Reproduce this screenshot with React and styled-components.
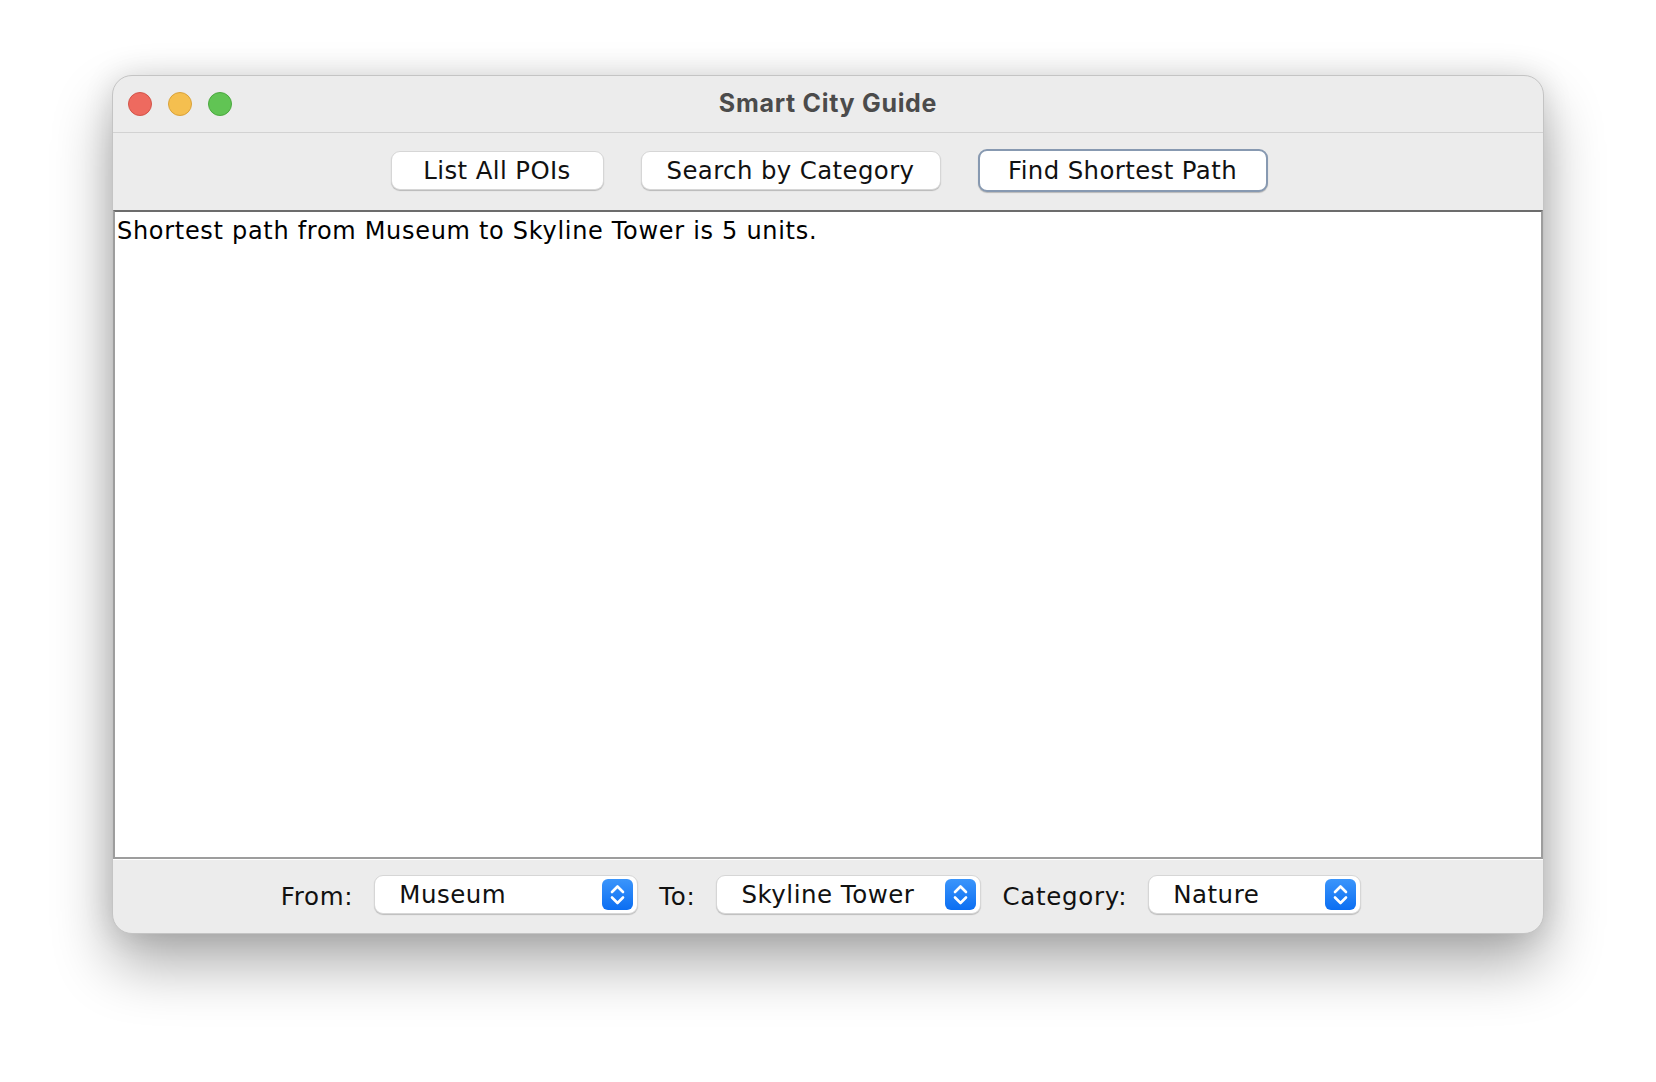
import React from 'react';
import styled, {createGlobalStyle} from 'styled-components';

const GlobalStyle = createGlobalStyle`
  html, body {
    margin: 0;
    padding: 0;
    background: #ffffff;
  }
`;

const Page = styled.div`
  width: 1656px;
  height: 1082px;
  box-sizing: border-box;
  padding: 75px 112px 0;
  font-family: "DejaVu Sans", "Liberation Sans", sans-serif;
`;

const Window = styled.div`
  width: 1432px;
  height: 859px;
  box-sizing: border-box;
  display: flex;
  flex-direction: column;
  background: #ececec;
  border: 1px solid #c4c4c4;
  border-radius: 20px;
  overflow: hidden;
  box-shadow: 0 30px 60px rgba(0, 0, 0, 0.33), 0 0 30px rgba(0, 0, 0, 0.12);
`;

const TitleBar = styled.div`
  height: 56px;
  flex: none;
  display: grid;
  grid-template-columns: 1fr auto 1fr;
  align-items: center;
  border-bottom: 1px solid #d2d2d2;
`;

const Lights = styled.div`
  display: flex;
  gap: 16px;
  padding-left: 15px;
`;

const Light = styled.span`
  width: 24px;
  height: 24px;
  border-radius: 50%;
  box-sizing: border-box;
  background: ${p => p.color};
  border: 1px solid ${p => p.edge};
`;

const Title = styled.div`
  font-family: Inter, "Liberation Sans", sans-serif;
  font-weight: 700;
  font-size: 25px;
  letter-spacing: 0.7px;
  color: #4b4b4b;
  padding-bottom: 2px;
`;

const Toolbar = styled.div`
  height: 77px;
  flex: none;
  display: flex;
  align-items: center;
  justify-content: center;
  gap: 37px;
  padding-bottom: 3px;
  padding-left: 2px;
  box-sizing: border-box;
`;

const Button = styled.button`
  width: ${p => p.width}px;
  height: ${p => (p.focused ? '43px' : '39px')};
  padding: 0;
  box-sizing: border-box;
  background: #ffffff;
  font-family: "DejaVu Sans", sans-serif;
  font-size: 24.4px;
  letter-spacing: 0.4px;
  color: #111;
  border: ${p => (p.focused ? '2px solid #8799b1' : '1px solid #d6d6d6')};
  border-radius: 9px;
  box-shadow: 0 1px 1px rgba(0, 0, 0, 0.22);
`;

const Output = styled.div`
  flex: 1;
  background: #ffffff;
  border-top: 2px solid #6c6c6c;
  border-left: 2px solid #9d9d9d;
  border-right: 2px solid #9d9d9d;
  border-bottom: 2px solid #9d9d9d;
  box-shadow: 0 1px 0 #ffffff;
  margin-bottom: 1px;
  padding: 5px 2px;
  font-size: 24px;
  letter-spacing: 0.7px;
  color: #000;
`;

const BottomBar = styled.div`
  height: 73px;
  flex: none;
  display: flex;
  align-items: center;
  justify-content: center;
  gap: 21px;
  padding-right: 14px;
  padding-bottom: 4px;
  box-sizing: border-box;
`;

const Label = styled.span`
  font-size: 24.5px;
  letter-spacing: 0.7px;
  color: #111;
  padding-top: 4px;
`;

const Combo = styled.div`
  width: ${p => p.width}px;
  height: 39px;
  box-sizing: border-box;
  display: flex;
  align-items: center;
  justify-content: space-between;
  padding: 0 4px 0 24px;
  background: #ffffff;
  border: 1px solid #d6d6d6;
  border-radius: 9px;
  box-shadow: 0 1px 1px rgba(0, 0, 0, 0.2);
  font-size: 24.5px;
  letter-spacing: 0.5px;
  color: #111;
`;

const Stepper = styled.span`
  width: 31px;
  height: 31px;
  border-radius: 6px;
  background: linear-gradient(#3b95fb, #0b6ef2);
  display: flex;
`;

const Arrows = () => (
  <Stepper>
    <svg width="31" height="31" viewBox="0 0 31 31">
      <path d="M10 13 L15.5 7.5 L21 13 M10 18.5 L15.5 24 L21 18.5" fill="none" stroke="#fff" strokeWidth="2.6" strokeLinecap="round" strokeLinejoin="round" />
    </svg>
  </Stepper>
);

const Select = ({width, value}) => (
  <Combo width={width}>
    <span>{value}</span>
    <Arrows />
  </Combo>
);

export default function App() {
  return (
    <Page>
      <GlobalStyle />
      <Window>
        <TitleBar>
          <Lights>
            <Light color="#ee6a5f" edge="#d25449" />
            <Light color="#f5bf4f" edge="#d9a23a" />
            <Light color="#61c454" edge="#4ba83f" />
          </Lights>
          <Title>Smart City Guide</Title>
          <div />
        </TitleBar>
        <Toolbar>
          <Button width={213}>List All POIs</Button>
          <Button width={300}>Search by Category</Button>
          <Button width={290} focused>Find Shortest Path</Button>
        </Toolbar>
        <Output>Shortest path from Museum to Skyline Tower is 5 units.</Output>
        <BottomBar>
          <Label>From:</Label>
          <Select width={264} value="Museum" />
          <Label>To:</Label>
          <Select width={265} value="Skyline Tower" />
          <Label>Category:</Label>
          <Select width={213} value="Nature" />
        </BottomBar>
      </Window>
    </Page>
  );
}
